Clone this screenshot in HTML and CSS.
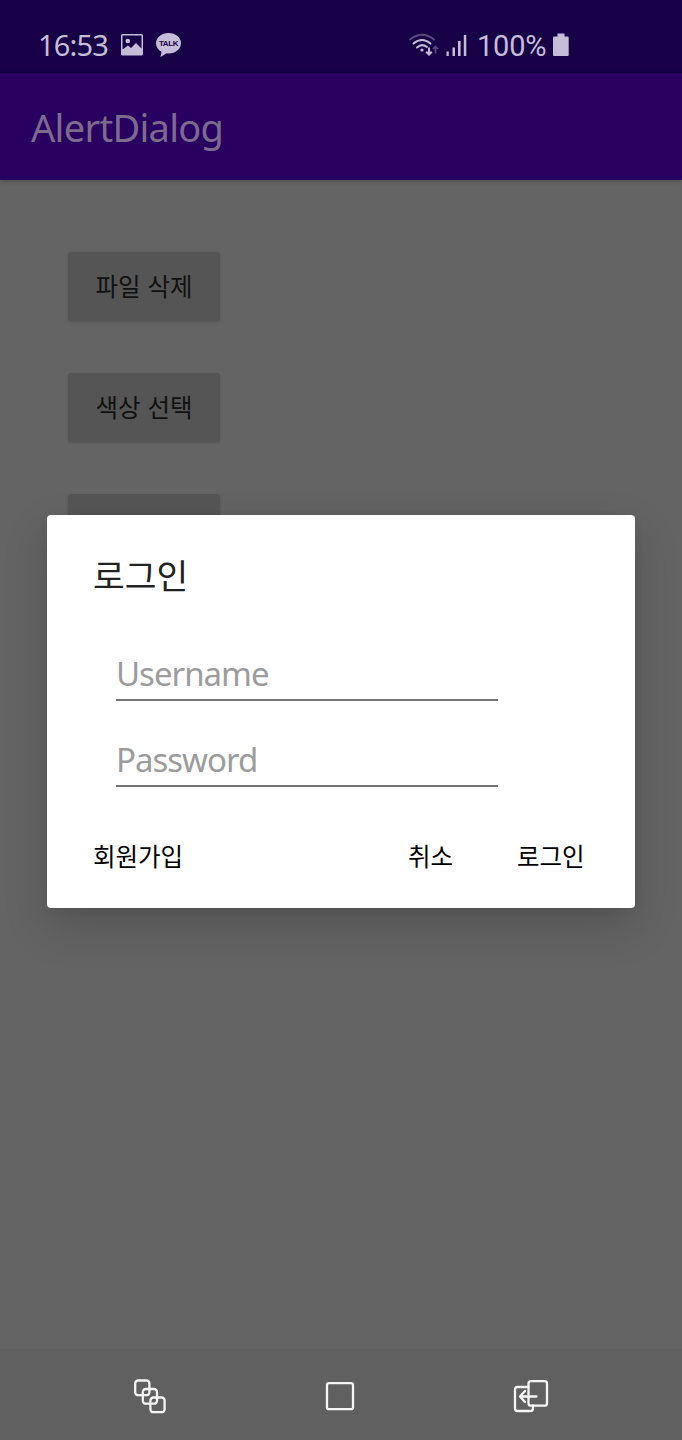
FILE: index.html
```html
<!DOCTYPE html>
<html lang="ko">
<head>
<meta charset="utf-8">
<title>AlertDialog</title>
<link rel="stylesheet" href="styles.css">
</head>
<body>
<div class="screen">
  <header class="status">
    <span class="clock">16:53</span>
    <svg class="picture" width="24" height="24" viewBox="0 0 24 24"><path fill="#c6bcd8" fill-rule="evenodd" d="M2.5 1H21.5Q23 1 23 2.500V21Q23 22.500 21.500 22.500H2.500Q1 22.500 1 21V2.500Q1 1 2.500 1ZM2.500 2.500V16.500L8 12.500L11 15L16 10L21.500 15.500V2.500Z"/><circle cx="7.800" cy="8" r="2.300" fill="#c6bcd8"/></svg>
    <svg class="talk" width="27" height="26" viewBox="0 0 27 26"><path fill="#c6bcd8" d="M13.500 1C6.500 1 1 5.500 1 11.200C1 15 3.200 18 6.500 19.800L5.500 25L11.500 21.300Q12.500 21.400 13.500 21.400C20.500 21.400 26 17 26 11.200S20.500 1 13.500 1Z"/><text class="talk-label" x="13.500" y="14.300">TALK</text></svg>
    <svg class="wifi" width="32" height="26" viewBox="0 0 32 26" fill="none" stroke="#c6bcd8" stroke-width="2" stroke-linecap="round"><path stroke="#5d4884" d="M2 7.500Q14 -2 26 7.500"/><path d="M5.500 11.500Q14 4.500 22.500 11.500M9 15.500Q14 11 19 15"/><circle cx="14" cy="18" r="1.600" fill="#c6bcd8" stroke="none"/><path stroke-linecap="butt" d="M21 15.500V22M18.200 19.700L21 22.500L23.800 19.700"/><path stroke="#5d4884" stroke-width="1.700" stroke-linecap="butt" d="M27.500 21.500V14.500M25 17L27.500 14.500L30 17"/></svg>
    <svg class="signal" width="22" height="24" viewBox="0 0 22 24"><path fill="#c6bcd8" d="M0.500 18.500H2.800V23H0.500ZM6.500 14.500H9V23H6.500ZM12 8H14.600V23H12ZM17.800 2H20.300V23H17.800Z"/></svg>
    <span class="percent">100%</span>
    <svg class="battery" width="16" height="24" viewBox="0 0 16 24"><path fill="#c6bcd8" d="M4.500 0.500H11.500V3.500H14.500Q15.700 3.500 15.700 4.700V22Q15.700 23 14.700 23H1Q0 23 0 22V4.700Q0 3.500 1.200 3.500H4.500Z"/></svg>
  </header>
  <div class="appbar"><h1 class="app-title">AlertDialog</h1></div>
  <main class="content">
    <button class="raised">파일 삭제</button>
    <button class="raised">색상 선택</button>
    <button class="raised"></button>
  </main>
  <nav class="nav">
    <svg class="recents" width="34" height="36" viewBox="0 0 34 36" fill="none" stroke="#f5f5f5" stroke-width="2.300"><rect x="2.200" y="2.500" width="14.200" height="14.700" rx="3"/><rect x="9.800" y="11" width="14.200" height="14.700" rx="3"/><rect x="17.400" y="19.500" width="14.200" height="14.700" rx="3"/></svg>
    <svg class="home" width="30" height="30" viewBox="0 0 30 30" fill="none" stroke="#f5f5f5" stroke-width="2.300"><rect x="2" y="2.200" width="26" height="26" rx="2"/></svg>
    <svg class="back" width="36" height="34" viewBox="0 0 36 34" fill="none" stroke="#f5f5f5" stroke-width="2.300" stroke-linecap="round" stroke-linejoin="round"><path d="M15.500 8H4.500Q2 8 2 10.500V29.500Q2 32 4.500 32H17.500Q20 32 20 29.500V26.500"/><rect x="15.500" y="2.200" width="18.500" height="24.500" rx="2.500"/><path d="M23.500 17.500H7.800M12 12L7 17.500L12 23"/></svg>
  </nav>
  <section class="dialog">
    <h2 class="dialog-title">로그인</h2>
    <div class="field"><span class="hint username">Username</span></div>
    <div class="field"><span class="hint password">Password</span></div>
    <div class="actions">
      <span class="action">회원가입</span>
      <span class="action cancel">취소</span>
      <span class="action login">로그인</span>
    </div>
  </section>
</div>
</body>
</html>
```
FILE: styles.css
```css
* { box-sizing: border-box; }
body { margin: 0; font-family: "Noto Sans", "Noto Sans CJK KR", sans-serif; }
.screen { position: relative; width: 682px; height: 1440px; display: flex; flex-direction: column; overflow: hidden; background: #646464; }
.status { height: 73px; display: flex; align-items: center; padding: 17px 0 0 38px; background: #170046; color: #c6bcd8; }
.clock { width: 82px; font-size: 29px; line-height: 56px; letter-spacing: -0.8px; }
.talk { margin-left: 11px; overflow: visible; }
.talk-label { font: bold 8px "Liberation Sans", sans-serif; letter-spacing: -0.4px; text-anchor: middle; fill: #170046; }
.wifi { margin-left: 226px; }
.signal { margin-left: 6px; }
.percent { width: 76px; margin-left: 9px; padding-top: 2px; font-family: Roboto, sans-serif; font-size: 29px; line-height: 56px; font-weight: 400; letter-spacing: -0.2px; }
.appbar { position: relative; height: 107px; padding: 28px 31px; background: #28005f; box-shadow: 0 1px 4px rgba(0, 0, 0, .25); }
.app-title { margin: 0; font-size: 38px; font-weight: 400; line-height: 52px; letter-spacing: -0.7px; color: #7d6b8f; }
.content { flex: 1; display: flex; flex-direction: column; align-items: flex-start; gap: 52px; padding: 72px 68px; }
.raised { width: 152px; height: 69px; padding: 0 0 2px; border: 0; border-radius: 3px; background: #555; box-shadow: 0 1px 3px rgba(0, 0, 0, .15); color: #111; font: 400 24.500px/67px "Noto Sans CJK KR", sans-serif; }
.nav { height: 91px; display: flex; align-items: center; padding: 3px 0 0 133px; background: #606060; }
.home { margin-left: 158px; }
.back { margin-left: 158px; }
.dialog { position: absolute; left: 47px; top: 515px; width: 588px; height: 393px; padding: 34px 46px 0; background: #fff; border-radius: 4px; box-shadow: 0 18px 44px rgba(0, 0, 0, .17), 0 2px 10px rgba(0, 0, 0, .06); }
.dialog-title { margin: 0 0 16px; font: 400 34.500px/50px "Noto Sans CJK KR", sans-serif; color: #222; }
.field { width: 382px; height: 86px; margin-left: 23px; padding-top: 35px; border-bottom: 2px solid #757575; }
.hint { display: block; line-height: 48px; font-size: 33px; letter-spacing: -1px; color: #9c9c9c; }
.actions { display: flex; margin-top: 50px; font: 400 24.500px/38px "Noto Sans CJK KR", sans-serif; color: #000; }
.action { width: 90px; white-space: nowrap; }
.cancel { margin-left: 225px; width: 45px; }
.login { margin-left: 64px; width: 68px; }
```
